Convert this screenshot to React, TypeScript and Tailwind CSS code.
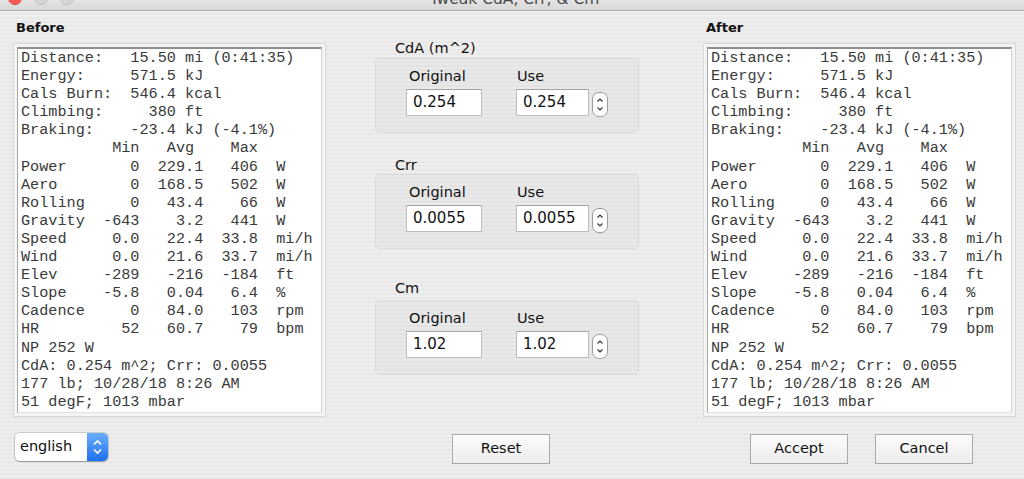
import React from "react";

const UI = { fontFamily: '"DejaVu Sans", "Noto Sans", sans-serif' };
const MONO = { fontFamily: '"Liberation Mono", "Courier New", monospace' };

const stats: string[][] = [
  ["Power", "0", "229.1", "406", "W"],
  ["Aero", "0", "168.5", "502", "W"],
  ["Rolling", "0", "43.4", "66", "W"],
  ["Gravity", "-643", "3.2", "441", "W"],
  ["Speed", "0.0", "22.4", "33.8", "mi/h"],
  ["Wind", "0.0", "21.6", "33.7", "mi/h"],
  ["Elev", "-289", "-216", "-184", "ft"],
  ["Slope", "-5.8", "0.04", "6.4", "%"],
  ["Cadence", "0", "84.0", "103", "rpm"],
  ["HR", "52", "60.7", "79", "bpm"],
];

const lines: string[] = [
  "Distance:   15.50 mi (0:41:35)",
  "Energy:     571.5 kJ",
  "Cals Burn:  546.4 kcal",
  "Climbing:     380 ft",
  "Braking:    -23.4 kJ (-4.1%)",
  "          Min   Avg    Max",
  ...stats.map(
    ([n, a, b, c, u]) =>
      n.padEnd(9) + a.padStart(4) + b.padStart(7) + c.padStart(6) + "  " + u
  ),
  "NP 252 W",
  "CdA: 0.254 m^2; Crr: 0.0055",
  "177 lb; 10/28/18 8:26 AM",
  "51 degF; 1013 mbar",
];

function SummaryBox() {
  return (
    <div className="w-[313px] h-[374px] border border-[#d8d8d8] bg-[#f4f4f4] p-[3px]">
      <div className="h-full bg-white border-t-2 border-t-[#8e8e8e] border-l border-l-[#a8a8a8] border-r border-r-[#d2d2d2] border-b border-b-[#e2e2e2] pl-[3px]">
        <pre
          style={MONO}
          className="m-0 text-[15.2px] leading-[18.1px] text-[#3a3a3a] whitespace-pre"
        >
          {lines.join("\n")}
        </pre>
      </div>
    </div>
  );
}

function Stepper() {
  return (
    <svg width="16" height="25" viewBox="0 0 16 25" className="mt-[3px] ml-[3px]">
      <rect x="0.5" y="0.5" width="15" height="24" rx="6.5" fill="#ffffff" stroke="#9c9c9c" />
      <path d="M5.5 9.5 L8 7 L10.5 9.5" fill="none" stroke="#333" strokeWidth="1.2" />
      <path d="M5.5 15.5 L8 18 L10.5 15.5" fill="none" stroke="#333" strokeWidth="1.2" />
    </svg>
  );
}

function Field({ value, w }: { value: string; w: string }) {
  return (
    <div
      className={`${w} h-[27px] bg-white border border-[#bdbdbd] border-t-[#a4a4a4] flex items-center pl-[6px] text-[15px] text-[#111]`}
    >
      {value}
    </div>
  );
}

function Group({ title, value, mt, boxMt }: { title: string; value: string; mt: string; boxMt: string }) {
  return (
    <div className={mt}>
      <div className="pl-[20px] text-[14.5px] leading-[17px] text-[#111]">{title}</div>
      <div
        className={`${boxMt} h-[75px] rounded-[5px] border border-black/[0.06] bg-black/[0.02] pt-[9px] pl-[30px]`}
      >
        <div className="flex">
          <div className="w-[110px]">
            <div className="pl-[3px] text-[14.5px] leading-[17px] text-[#111]">Original</div>
            <div className="mt-[4px]">
              <Field value={value} w="w-[76px]" />
            </div>
          </div>
          <div>
            <div className="pl-[1px] text-[14.5px] leading-[17px] text-[#111]">Use</div>
            <div className="mt-[4px] flex items-start">
              <Field value={value} w="w-[73px]" />
              <Stepper />
            </div>
          </div>
        </div>
      </div>
    </div>
  );
}

function Button({ label, cls }: { label: string; cls?: string }) {
  return (
    <div
      className={`w-[98px] h-[30px] border border-[#a9a9a9] bg-linear-to-b from-[#fbfbfb] to-[#ededed] flex items-center justify-center text-[14.5px] text-[#111] ${cls ?? ""}`}
    >
      {label}
    </div>
  );
}

export default function App() {
  return (
    <div style={UI} className="w-[1024px] h-[479px] overflow-hidden bg-[#ececec]">
      {/* title bar */}
      <div className="h-[11px] border-b border-[#aeaeae] bg-linear-to-b from-[#e4e4e4] to-[#d8d8d8] grid grid-cols-[1fr_auto_1fr] overflow-hidden">
        <div className="flex gap-[12px] pl-[8px]">
          <div className="w-[14px] h-[14px] -mt-[9px] rounded-full bg-[#fc5b57] border border-[#e0443e]" />
          <div className="w-[14px] h-[14px] -mt-[9px] rounded-full bg-[#d6d6d6] border border-[#bcbcbc]" />
          <div className="w-[14px] h-[14px] -mt-[9px] rounded-full bg-[#d6d6d6] border border-[#bcbcbc]" />
        </div>
        <div className="-mt-[9px] text-[15.5px] leading-[16px] text-[#4a4a4a] pl-[5px]">
          Tweak CdA, Crr, &amp; Cm
        </div>
        <div />
      </div>

      {/* body */}
      <div className="h-[468px] flex pl-[13px] bg-[image:repeating-linear-gradient(180deg,#eeeeee_0px,#eeeeee_2px,#e8e8e8_2px,#e8e8e8_4px)]">
        {/* left */}
        <div className="w-[313px] flex flex-col pt-[9px]">
          <div className="pl-[3px] font-bold text-[13px] leading-[16px] text-[#111]">Before</div>
          <div className="mt-[7px]">
            <SummaryBox />
          </div>
          <div className="mt-[16px] ml-[2px] w-[93px] h-[28px] flex rounded-[5px] shadow-[0_0_0_1px_rgba(0,0,0,0.14),0_1px_1.5px_rgba(0,0,0,0.25)]">
            <div className="flex-1 bg-white rounded-l-[5px] flex items-center pl-[5px] text-[14.5px] text-[#111]">
              english
            </div>
            <div className="w-[21px] rounded-r-[5px] bg-linear-to-b from-[#6aaefc] to-[#1b6ff0] flex items-center justify-center">
              <svg width="21" height="28" viewBox="0 0 21 28">
                <path d="M7 11.5 L10.5 8 L14 11.5" fill="none" stroke="#fff" strokeWidth="1.6" />
                <path d="M7 16.5 L10.5 20 L14 16.5" fill="none" stroke="#fff" strokeWidth="1.6" />
              </svg>
            </div>
          </div>
        </div>

        {/* middle */}
        <div className="ml-[49px] w-[264px] flex flex-col pt-[29px]">
          <Group title="CdA (m^2)" value="0.254" mt="mt-0" boxMt="mt-[1px]" />
          <Group title="Crr" value="0.0055" mt="mt-[24px]" boxMt="mt-0" />
          <Group title="Cm" value="1.02" mt="mt-[31px]" boxMt="mt-[3px]" />
          <Button label="Reset" cls="mt-[59px] ml-[77px]" />
        </div>

        {/* right */}
        <div className="ml-[64px] w-[313px] flex flex-col pt-[9px]">
          <div className="pl-[3px] font-bold text-[13px] leading-[16px] text-[#111]">After</div>
          <div className="mt-[7px]">
            <SummaryBox />
          </div>
          <div className="mt-[17px] flex pl-[47px] gap-[27px]">
            <Button label="Accept" />
            <Button label="Cancel" />
          </div>
        </div>
      </div>
    </div>
  );
}
